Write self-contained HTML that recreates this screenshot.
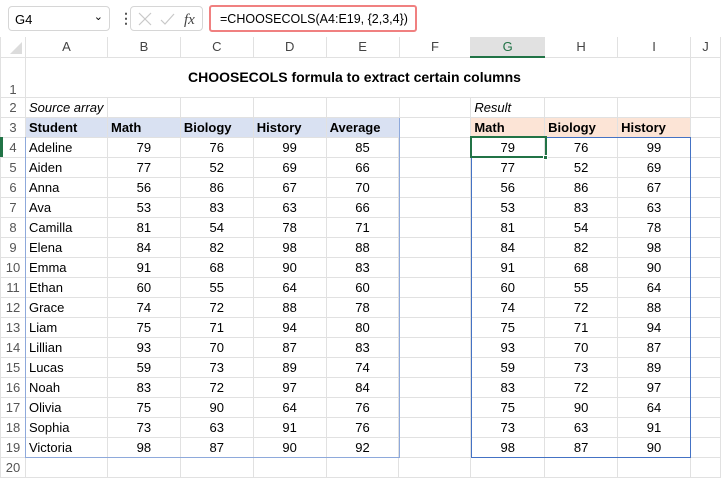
<!DOCTYPE html>
<html><head><style>
*{box-sizing:border-box;margin:0;padding:0}
body{width:721px;height:477px;overflow:hidden;background:#fff;font-family:"Liberation Sans",Arial,sans-serif;position:relative}
.top{position:absolute;left:0;top:0;width:721px;height:37px;background:#fff}
.nb{position:absolute;left:8px;top:6px;width:102px;height:25px;background:#fff;border:1px solid #d6d6d6;border-radius:4px;font-size:13px;padding:5px 6px}
.fx{position:absolute;left:130px;top:6px;width:73px;height:25px;background:#fff;border:1px solid #d6d6d6;border-radius:4px}
.fb{position:absolute;left:209px;top:5px;width:208px;height:27px;background:#fff;border:2px solid #f08080;border-radius:3px;font-size:12.5px;padding:5px 0 0 9px;white-space:nowrap;overflow:hidden}
table{position:absolute;left:0;top:37px;border-collapse:collapse;table-layout:fixed;font-size:13px}
td{height:20px;border:1px solid #e1e1e1;padding:0 3px;white-space:nowrap;overflow:hidden;color:#000}
tr.h td{background:#fff;color:#444;text-align:center;border-color:#e1e1e1;border-top:none;height:20px}
td.r{background:#fff;color:#555;text-align:center;border-color:#e1e1e1;padding:0}
td.n{text-align:center}
.b{font-weight:bold}
.bl{background:#d9e1f2}
.pe{background:#fce4d6}
</style></head><body>
<div class="top">
<div class="nb">G4<span style="position:absolute;right:6px;top:3px;font-size:11px">&#8964;</span></div>
<div style="position:absolute;left:119px;top:10px;font-size:14px;color:#555;font-weight:bold">&#8942;</div>
<div class="fx">
<svg width="73" height="25"><path d="M8 6l12 12M20 6L8 18" stroke="#c8c8c8" stroke-width="1.2" fill="none"/><path d="M30 13l4 4 9-10" stroke="#c8c8c8" stroke-width="1.2" fill="none"/><text x="53" y="17" font-family="Liberation Serif" font-style="italic" font-size="15" fill="#444">fx</text></svg>
</div>
<div class="fb">=CHOOSECOLS(A4:E19, {2,3,4})</div>
</div>
<table>
<colgroup><col style="width:25px"><col style="width:82px"><col style="width:73px"><col style="width:73px"><col style="width:73px"><col style="width:73px"><col style="width:72px"><col style="width:74px"><col style="width:73px"><col style="width:73px"><col style="width:30px"></colgroup>
<tr class="h"><td style="background:#fff;padding:0"><svg width="24" height="18" style="display:block"><path d="M21 4L21 16L9 16Z" fill="#dcdcdc"/></svg></td><td>A</td><td>B</td><td>C</td><td>D</td><td>E</td><td>F</td><td style="background:#e1e1e1;color:#217346;border-bottom:2px solid #217346">G</td><td>H</td><td>I</td><td>J</td></tr>
<tr style="height:40px"><td class="r" style="vertical-align:bottom;height:40px">1</td><td colspan="9" class="b" style="text-align:center;font-size:14px;border:none;border-bottom:1px solid #e1e1e1;padding-right:10px;overflow:visible">CHOOSECOLS formula to extract certain columns</td><td></td></tr>
<tr><td class="r">2</td><td style="font-style:italic;overflow:visible">Source array</td><td></td><td></td><td></td><td></td><td></td><td style="font-style:italic">Result</td><td></td><td></td><td></td></tr>
<tr><td class="r">3</td><td class="b bl" style="border-left:1px solid #8ea9db;border-top:1px solid #8ea9db">Student</td><td class="b bl" style="border-top:1px solid #8ea9db">Math</td><td class="b bl" style="border-top:1px solid #8ea9db">Biology</td><td class="b bl" style="border-top:1px solid #8ea9db">History</td><td class="b bl" style="border-top:1px solid #8ea9db;border-right:1px solid #8ea9db">Average</td><td></td><td class="b pe">Math</td><td class="b pe">Biology</td><td class="b pe">History</td><td></td></tr>
</table>
<table id="d" style="top:137px">
<colgroup><col style="width:25px"><col style="width:82px"><col style="width:73px"><col style="width:73px"><col style="width:73px"><col style="width:73px"><col style="width:72px"><col style="width:74px"><col style="width:73px"><col style="width:73px"><col style="width:30px"></colgroup>
</table>
<div style="position:absolute;left:25px;top:137px;width:375px;height:321px;border:1px solid #8ea9db;border-top:none;pointer-events:none"></div>
<div style="position:absolute;left:471px;top:137px;width:220px;height:321px;border:1px solid #4472c4;pointer-events:none"></div>
<div style="position:absolute;left:470px;top:136px;width:77px;height:22px;border:2px solid #217346"></div>
<div style="position:absolute;left:543px;top:155px;width:5px;height:5px;background:#217346;border:1px solid #fff"></div>
<div style="position:absolute;left:0;top:137px;width:3px;height:20px;background:#217346"></div>
<script>
var d=[["Adeline",79,76,99,85],["Aiden",77,52,69,66],["Anna",56,86,67,70],["Ava",53,83,63,66],["Camilla",81,54,78,71],["Elena",84,82,98,88],["Emma",91,68,90,83],["Ethan",60,55,64,60],["Grace",74,72,88,78],["Liam",75,71,94,80],["Lillian",93,70,87,83],["Lucas",59,73,89,74],["Noah",83,72,97,84],["Olivia",75,90,64,76],["Sophia",73,63,91,76],["Victoria",98,87,90,92]];
var h="";d.forEach(function(r,i){h+='<tr><td class="r">'+(i+4)+'</td><td>'+r[0]+'</td><td class="n">'+r[1]+'</td><td class="n">'+r[2]+'</td><td class="n">'+r[3]+'</td><td class="n">'+r[4]+'</td><td></td><td class="n">'+r[1]+'</td><td class="n">'+r[2]+'</td><td class="n">'+r[3]+'</td><td></td></tr>';});
h+='<tr><td class="r">20</td><td></td><td></td><td></td><td></td><td></td><td></td><td></td><td></td><td></td><td></td></tr>';
document.getElementById("d").insertAdjacentHTML("beforeend",h);
</script>
</body></html>
